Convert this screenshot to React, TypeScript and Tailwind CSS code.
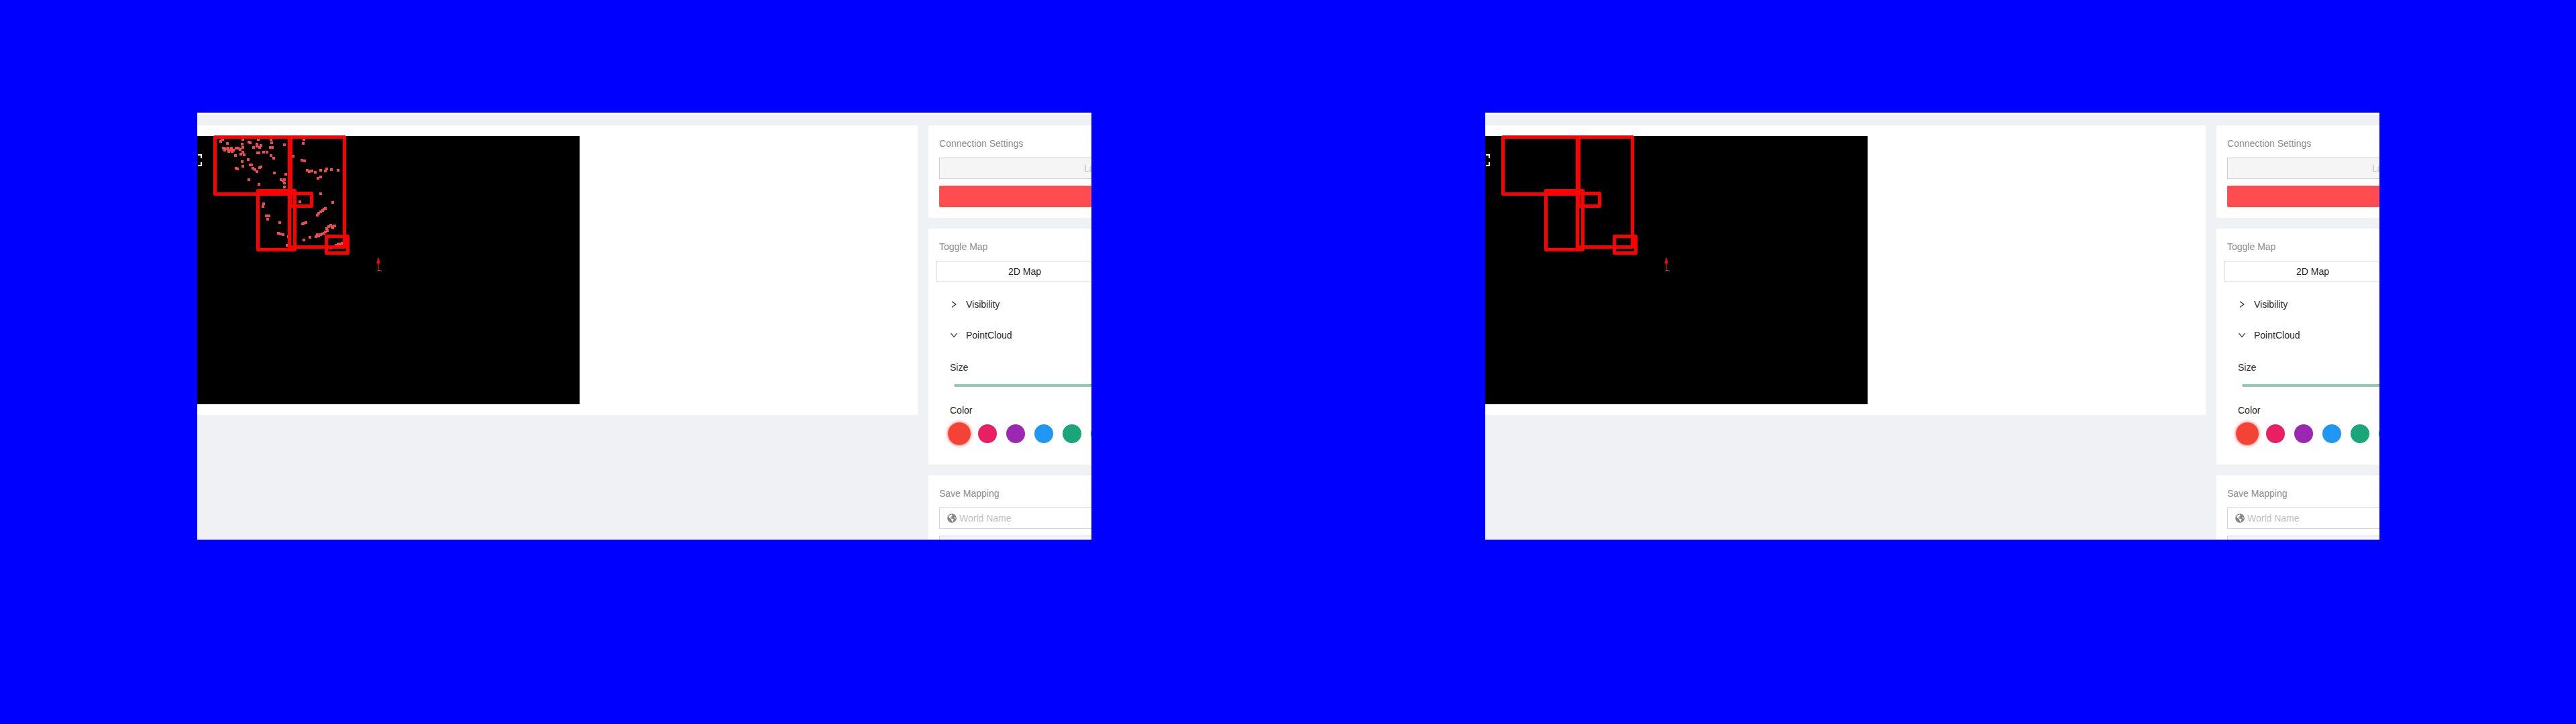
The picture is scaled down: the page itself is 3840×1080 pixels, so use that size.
import React from "react";
import { FaGlobeAmericas } from "react-icons/fa";

// Scan points, in thirds of a pixel from the map's top left corner.
const POINTS: [number, number][] = [
  [105, 25], [115, 16], [136, 32], [117, 54], [124, 64], [126, 56], [133, 56], [139, 54], [145, 62], [142, 70], [152, 55], [150, 64], [156, 70], [162, 63],
  [174, 53], [183, 53], [191, 61], [201, 36], [204, 51], [203, 73], [203, 15], [194, 82], [210, 85], [172, 88], [228, 105], [232, 28], [237, 31],
  [202, 113], [204, 134], [175, 144], [181, 148], [236, 129], [243, 130], [250, 145], [258, 149], [268, 158], [279, 140], [285, 137],
  [251, 51], [267, 36], [266, 45], [273, 15], [278, 52], [284, 41], [270, 75], [277, 76], [297, 73], [312, 73], [331, 15], [334, 30], [327, 50], [336, 51],
  [330, 88], [342, 100], [390, 38], [345, 165], [396, 172], [376, 195], [391, 195], [385, 200], [389, 209], [389, 229], [231, 196], [275, 215],
  [430, 91], [477, 16], [475, 33], [468, 109], [480, 112], [491, 154], [502, 158], [512, 157], [528, 162], [553, 152], [574, 156], [580, 146], [600, 149], [631, 152],
  [541, 189], [553, 184], [553, 259], [606, 298], [459, 294], [296, 304], [294, 315], [309, 358], [321, 356], [315, 371], [369, 387], [362, 436], [372, 439], [384, 441],
  [402, 488], [407, 450], [536, 353], [544, 346], [552, 340], [560, 334], [567, 328], [573, 324], [470, 393], [478, 389], [487, 386], [476, 466], [503, 454],
  [530, 449], [537, 441], [544, 446], [551, 441], [559, 439], [566, 435], [573, 430], [582, 424], [580, 415], [588, 406], [597, 398], [604, 404], [606, 411], [615, 402],
  [597, 502], [622, 488], [630, 484], [638, 484], [647, 481],
];

// Detection rectangles, outlines centred on the stroke.
const BOXES: [number, number, number, number][] = [
  [26.5, 1.5, 113, 85],
  [137.5, 1.5, 82, 164],
  [90.5, 81.5, 55, 88],
  [139.5, 85.5, 31, 19],
  [192.5, 149.5, 32, 25],
];

const COLORS = ["bg-[#e91e63]", "bg-[#9c27b0]", "bg-[#2196f3]", "bg-[#1ba57b]", "bg-[#009688]"];

function MapCanvas({ points }: { points: boolean }) {
  return (
    <div className="h-[400px] w-[570px] bg-black">
      <svg width="570" height="400" className="block overflow-visible">
        <path d="M1 28h5v5M6 39v5h-5" fill="none" stroke="#fff" strokeWidth="2" />
        {points &&
          POINTS.map(([x, y], i) => (
            <rect
              key={i}
              x={Math.round(x / 3 - 2)}
              y={Math.round(y / 3 - 2)}
              width="4"
              height="4"
              fill={i % 4 === 1 ? "#f0504a" : "#ea4a50"}
            />
          ))}
        {BOXES.map(([x, y, w, h], i) => (
          <rect key={i} x={x} y={y} width={w} height={h} fill="none" stroke="#f00" strokeWidth="5" strokeLinejoin="round" />
        ))}
        <path d="M270 190v11" stroke="#7a1510" strokeWidth="2" />
        <path d="M270 180l2.8 9.500q-2.8 2-5.6 0z" fill="#e80c0c" />
        <path d="M268 201.500l2-1 5 .5" fill="none" stroke="#a05a50" strokeWidth="1" />
      </svg>
    </div>
  );
}

function Title({ children }: { children: React.ReactNode }) {
  return <div className="h-[22px] leading-[22px] text-[#8c8c8c]">{children}</div>;
}

function Chevron({ down }: { down?: boolean }) {
  return (
    <svg width="10" height="10" viewBox="0 0 10 10" fill="none" stroke="#262626" strokeWidth="1.1">
      <path d={down ? "M.5 2.200L5 7.600L9.500 2.200" : "M2 .8L8 5L2 9.200"} />
    </svg>
  );
}

function Screen({ points }: { points: boolean }) {
  return (
    <div className="flex h-[637px] w-[1333px] overflow-hidden border-t-[3px] border-white bg-[#f0f1f5] pt-4 font-['Liberation_Sans',Arial,sans-serif] text-[14px] leading-[22px]">
      <div className="h-[432px] w-[1074px] shrink-0 rounded-r-[3px] bg-white pt-4">
        <MapCanvas points={points} />
      </div>
      <div className="ml-4 flex w-[300px] shrink-0 flex-col gap-4">
        <section className="h-[138px] shrink-0 rounded-[3px] bg-white p-4 pr-0">
          <Title>Connection Settings</Title>
          <div className="mt-2.5 h-8 border border-[#d0d0d0] bg-[#f5f5f5] pl-[215px] leading-[30px] text-[#bfbfbf]">La</div>
          <div className="mt-2.5 h-8 rounded-[2px] bg-[#ff4d4f]" />
        </section>
        <section className="h-[352px] shrink-0 rounded-[3px] bg-white p-4 pr-0">
          <Title>Toggle Map</Title>
          <div className="mt-2.5 -ml-[5px] h-8 rounded-[2px] border border-[#d4d4d4] pl-[107px] leading-[30px] text-[#262626]">2D Map</div>
          <div className="mt-2.5 pl-4 text-[#262626]">
            <div className="flex h-[46px] items-center gap-3.5 pl-px"><Chevron /><span className="-ml-px">Visibility</span></div>
            <div className="flex h-[46px] items-center gap-3.5 pl-px"><Chevron down /><span className="-ml-px">PointCloud</span></div>
            <div className="mt-3.5">Size</div>
            <div className="mt-3.5 ml-[6px] h-1 rounded-[2px] bg-[#91c8b1]" />
            <div className="mt-6">Color</div>
            <div className="mt-2.5 flex gap-3.5">
              <span className="size-7 shrink-0 scale-[1.2] rounded-full bg-[#f44336] shadow-[0_0_4px_#f44336]" />
              {COLORS.map((c) => (
                <span key={c} className={`size-7 shrink-0 rounded-full ${c}`} />
              ))}
            </div>
          </div>
        </section>
        <section className="h-[200px] shrink-0 rounded-[3px] bg-white p-4 pr-0">
          <Title>Save Mapping</Title>
          <div className="mt-2.5 flex h-8 items-center gap-1 border border-[#d4d4d4] pl-[11px] text-[#bfbfbf]">
            <FaGlobeAmericas className="size-3.5 text-[#858585]" />
            World Name
          </div>
          <div className="mt-2.5 h-8 border border-[#d0d0d0] bg-[#f5f5f5]" />
        </section>
      </div>
    </div>
  );
}

export default function App() {
  return (
    <div className="grid h-[1080px] w-[3840px] grid-cols-2 overflow-hidden bg-[#0000ff] pt-[168px]">
      <div className="pl-[294px]"><Screen points /></div>
      <div className="pl-[294px]"><Screen points={false} /></div>
    </div>
  );
}
